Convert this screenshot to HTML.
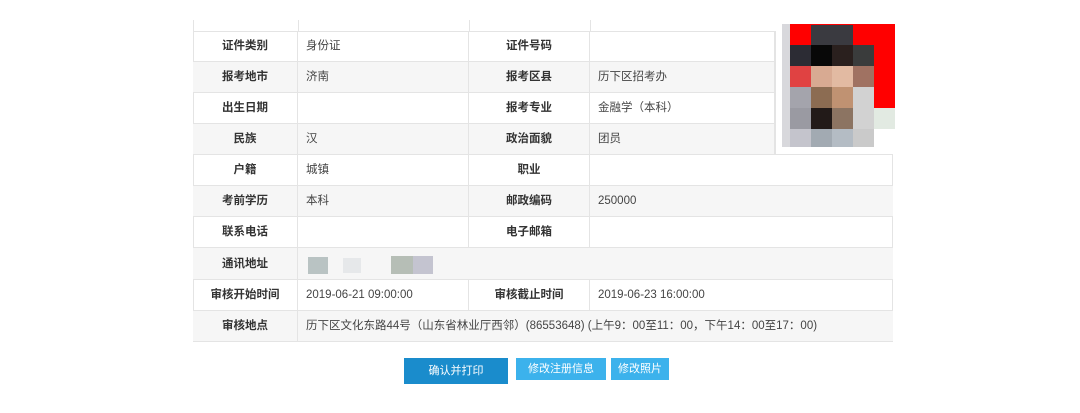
<!DOCTYPE html><html><head><meta charset="utf-8"><style>
body{margin:0;width:1080px;height:413px;background:#fff;position:relative;overflow:hidden;font-family:"Liberation Sans","Noto Sans CJK SC",sans-serif;font-size:11.5px;color:#333}
.r{position:absolute;left:193px;width:700px;height:31px;border-bottom:1px solid #e4e4e4;box-sizing:border-box}
.g{background:#f6f6f6}
.c{position:absolute;top:0;height:31px;line-height:30px;box-sizing:border-box;border-right:1px solid #e4e4e4;white-space:nowrap}
.l{text-align:center;font-weight:bold;color:#333}
.v{padding-left:8px;color:#444}
.b{position:absolute;color:#fff;text-align:center;font-size:11px}
.px{position:absolute;width:21px;height:21px}
</style></head><body>
<div style="position:absolute;left:193px;top:20px;width:700px;height:11px;border-bottom:1px solid #e4e4e4;border-left:1px solid #e4e4e4"></div>
<div style="position:absolute;left:298px;top:20px;width:1px;height:11px;background:#e4e4e4"></div>
<div style="position:absolute;left:469px;top:20px;width:1px;height:11px;background:#e4e4e4"></div>
<div style="position:absolute;left:590px;top:20px;width:1px;height:11px;background:#e4e4e4"></div>
<div style="position:absolute;left:193px;top:31px;width:700px;height:311px;border-left:1px solid #e4e4e4;border-right:1px solid #e4e4e4;box-sizing:border-box"></div>

<div class="r" style="top:31px"><div class="c l" style="left:0;width:105px">证件类别</div><div class="c v" style="left:105px;width:171px">身份证</div><div class="c l" style="left:276px;width:121px">证件号码</div><div class="c v" style="left:397px;width:185px"></div></div>
<div class="r g" style="top:62px"><div class="c l" style="left:0;width:105px">报考地市</div><div class="c v" style="left:105px;width:171px">济南</div><div class="c l" style="left:276px;width:121px">报考区县</div><div class="c v" style="left:397px;width:185px">历下区招考办</div></div>
<div class="r" style="top:93px"><div class="c l" style="left:0;width:105px">出生日期</div><div class="c v" style="left:105px;width:171px"></div><div class="c l" style="left:276px;width:121px">报考专业</div><div class="c v" style="left:397px;width:185px">金融学（本科）</div></div>
<div class="r g" style="top:124px"><div class="c l" style="left:0;width:105px">民族</div><div class="c v" style="left:105px;width:171px">汉</div><div class="c l" style="left:276px;width:121px">政治面貌</div><div class="c v" style="left:397px;width:185px">团员</div></div>
<div style="position:absolute;left:775px;top:31px;width:118px;height:124px;background:#fff;border-left:1px solid #e4e4e4;border-bottom:1px solid #e4e4e4;box-sizing:border-box"></div>
<div class="r" style="top:155px"><div class="c l" style="left:0;width:105px">户籍</div><div class="c v" style="left:105px;width:171px">城镇</div><div class="c l" style="left:276px;width:121px">职业</div></div>
<div class="r g" style="top:186px"><div class="c l" style="left:0;width:105px">考前学历</div><div class="c v" style="left:105px;width:171px">本科</div><div class="c l" style="left:276px;width:121px">邮政编码</div><div class="c v" style="left:397px;width:0;border:0">250000</div></div>
<div class="r" style="top:217px"><div class="c l" style="left:0;width:105px">联系电话</div><div class="c v" style="left:105px;width:171px"></div><div class="c l" style="left:276px;width:121px">电子邮箱</div></div>
<div class="r g" style="top:248px;height:32px"><div class="c l" style="left:0;width:105px;height:32px;line-height:32px">通讯地址</div>
<div style="position:absolute;left:115px;top:9px;width:20px;height:17px;background:#b9c3c3"></div>
<div style="position:absolute;left:150px;top:10px;width:18px;height:15px;background:#e6e8ea"></div>
<div style="position:absolute;left:198px;top:8px;width:22px;height:18px;background:#b6beb6"></div>
<div style="position:absolute;left:220px;top:8px;width:20px;height:18px;background:#c4c4d0"></div></div>
<div class="r" style="top:280px"><div class="c l" style="left:0;width:105px">审核开始时间</div><div class="c v" style="left:105px;width:171px">2019-06-21 09:00:00</div><div class="c l" style="left:276px;width:121px">审核截止时间</div><div class="c v" style="left:397px;width:0;border:0">2019-06-23 16:00:00</div></div>
<div class="r g" style="top:311px"><div class="c l" style="left:0;width:105px">审核地点</div><div class="c v" style="left:105px;width:500px;border:0">历下区文化东路44号（山东省林业厅西邻）(86553648) (上午9：00至11：00，下午14：00至17：00)</div></div>

<div style="position:absolute;left:782px;top:24px;width:113px;height:123px;background:#f00"></div>
<div style="position:absolute;left:782px;top:24px;width:8px;height:123px;background:#d8d8dc"></div>
<div class="px" style="left:790px;top:25px;background:#f00"></div><div class="px" style="left:811px;top:25px;background:#3a3a40"></div><div class="px" style="left:832px;top:25px;background:#3a3a40"></div>
<div class="px" style="left:790px;top:45px;background:#2c2c34"></div><div class="px" style="left:811px;top:45px;background:#080808"></div><div class="px" style="left:832px;top:45px;background:#2a201e"></div><div class="px" style="left:853px;top:45px;background:#3a3c3c"></div>
<div class="px" style="left:790px;top:66px;background:#e04242"></div><div class="px" style="left:811px;top:66px;background:#d8aa92"></div><div class="px" style="left:832px;top:66px;background:#e2baa2"></div><div class="px" style="left:853px;top:66px;background:#a07262"></div>
<div class="px" style="left:790px;top:87px;background:#a4a4ac"></div><div class="px" style="left:811px;top:87px;background:#8c6c52"></div><div class="px" style="left:832px;top:87px;background:#c09272"></div><div class="px" style="left:853px;top:87px;background:#d2d2d2"></div>
<div class="px" style="left:790px;top:108px;background:#9a9aa2"></div><div class="px" style="left:811px;top:108px;background:#221a18"></div><div class="px" style="left:832px;top:108px;background:#8c7462"></div><div class="px" style="left:853px;top:108px;background:#d2d2d2"></div><div class="px" style="left:874px;top:108px;background:#e2eae2"></div>
<div class="px" style="left:790px;top:129px;height:18px;background:#c4c4cc"></div><div class="px" style="left:811px;top:129px;height:18px;background:#a2aab2"></div><div class="px" style="left:832px;top:129px;height:18px;background:#b4bcc4"></div><div class="px" style="left:853px;top:129px;height:18px;background:#cacaca"></div><div class="px" style="left:874px;top:129px;height:18px;background:#fff"></div>

<div class="b" style="left:404px;top:358px;width:104px;height:26px;line-height:26px;background:#1a8ccc">确认并打印</div>
<div class="b" style="left:516px;top:358px;width:90px;height:22px;line-height:22px;background:#3cb2ec">修改注册信息</div>
<div class="b" style="left:611px;top:358px;width:58px;height:22px;line-height:22px;background:#3cb2ec">修改照片</div>
</body></html>
